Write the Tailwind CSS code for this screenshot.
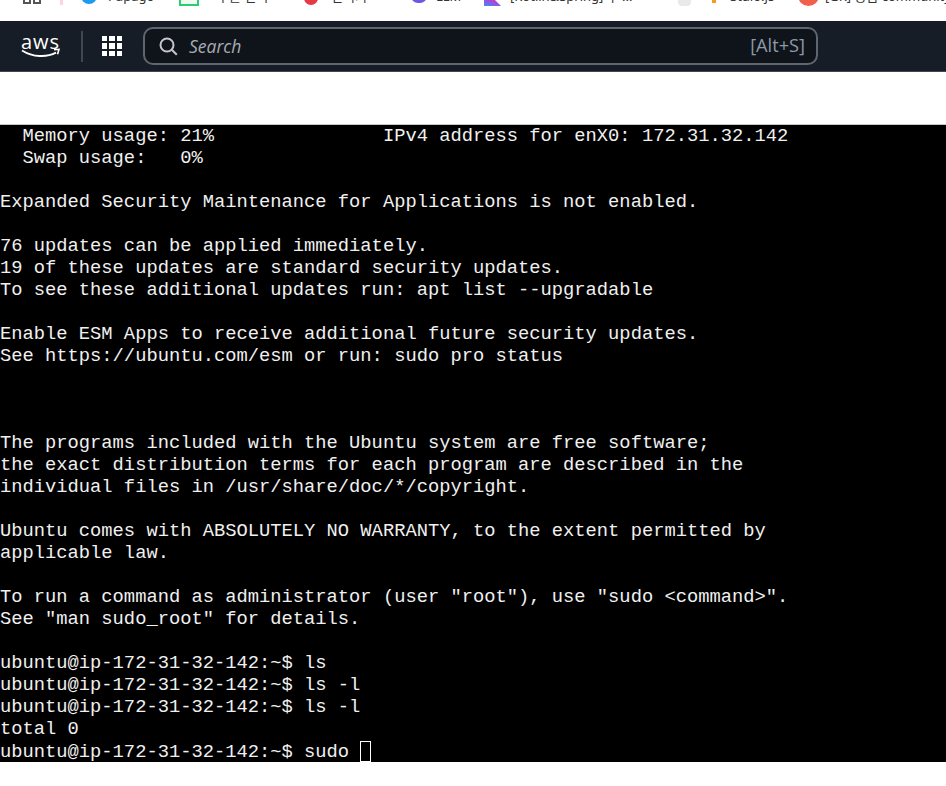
<!DOCTYPE html>
<html lang="en">
<head>
<meta charset="UTF-8">
<title>EC2 Instance Connect</title>
<script src="https://cdn.jsdelivr.net/npm/@tailwindcss/browser@4"></script>
</head>
<body class="bg-white h-[786px] overflow-hidden">
  <!-- browser bookmarks, cut off by the crop -->
  <div class="h-[21px] overflow-hidden bg-white relative font-['Noto_Sans','Noto_Sans_CJK_KR',sans-serif] text-[13px] text-[#333]">
    <div class="absolute left-[23px] top-[-10px] w-[8px] h-[14px] border-2 border-[#555]"></div>
    <div class="absolute left-[33px] top-[-10px] w-[8px] h-[14px] border-2 border-[#555]"></div>
    <div class="absolute left-[60px] top-[-10px] w-[3px] h-[15px] bg-[#f9d5e5]"></div>
    <div class="absolute left-[81px] top-[-10px] w-[16px] h-[14px] rounded-b-full bg-[#1d9bf0]"></div>
    <span class="absolute left-[108px] top-[-13px]">Papago</span>
    <div class="absolute left-[179px] top-[-10px] w-[20px] h-[16px] border-2 border-[#2ecc71] bg-[#eefaf2]"></div>
    <span class="absolute left-[217px] top-[-13px]">구글 번역</span>
    <div class="absolute left-[304px] top-[-10px] w-[14px] h-[15px] rounded-b-full bg-[#e53945]"></div>
    <span class="absolute left-[331px] top-[-13px]">번역기</span>
    <div class="absolute left-[411px] top-[-11px] w-[16px] h-[14px] rounded-full bg-[#6a5ae0]"></div>
    <span class="absolute left-[436px] top-[-13px]">LLM</span>
    <svg class="absolute left-[484px] top-0 w-[17px] h-[6px]" viewBox="0 0 17 6"><defs><linearGradient id="kt" x1="0" y1="1" x2="1" y2="0"><stop offset="0" stop-color="#3d8bff"/><stop offset="0.6" stop-color="#a04be0"/><stop offset="1" stop-color="#e2445c"/></linearGradient></defs><path d="M0 0h11l6 6H0z" fill="url(#kt)"/></svg>
    <span class="absolute left-[510px] top-[-13px]">[Kotlin&amp;Spring] 구 ...</span>
    <div class="absolute left-[678px] top-0 w-[13px] h-[6px] bg-[#c9c9c9]/40 rounded-b-sm"></div>
    <div class="absolute left-[712px] top-0 w-[4px] h-[3px] bg-[#f59b23]"></div>
    <span class="absolute left-[730px] top-[-13px]">Stdio.js</span>
    <div class="absolute left-[798px] top-[-15px] size-[21px] rounded-full bg-[#f0604d]"></div>
    <span class="absolute left-[825px] top-[-13px] whitespace-nowrap">[GK] 중급 community</span>
  </div>

  <!-- aws console header -->
  <header class="h-[51px] bg-[#161d26] border-b border-[#414750] flex items-center pl-[21px] pr-[128px]">
    <svg class="w-[40px] h-[26px] shrink-0" viewBox="0 0 40 26" fill="none">
      <text x="0" y="15.5" fill="#fff" font-family="'Open Sans',sans-serif" font-size="20" textLength="38">aws</text>
      <path d="M1 17.5c11 7 25 7 34 2.2" stroke="#fff" stroke-width="1.9" fill="none"/>
      <path d="M33 16.8l5-.5-1.5 5" stroke="#fff" stroke-width="1.6" fill="none"/>
    </svg>
    <div class="w-[2px] h-[31px] bg-[#414750] ml-[20px]"></div>
    <div class="ml-[19px] grid grid-cols-3 gap-[2px] w-[20px] shrink-0">
      <i class="block size-[5.3px] bg-white"></i><i class="block size-[5.3px] bg-white"></i><i class="block size-[5.3px] bg-white"></i>
      <i class="block size-[5.3px] bg-white"></i><i class="block size-[5.3px] bg-white"></i><i class="block size-[5.3px] bg-white"></i>
      <i class="block size-[5.3px] bg-white"></i><i class="block size-[5.3px] bg-white"></i><i class="block size-[5.3px] bg-white"></i>
    </div>
    <div class="ml-[21px] flex-1 h-[38px] rounded-[10px] border-2 border-[#5f6670] bg-[#0f141a] flex items-center pl-[14px] pr-[11px] font-['Open_Sans',sans-serif] text-[17.5px]">
      <svg class="w-[19px] h-[19px] shrink-0" viewBox="0 0 19 19" fill="none" stroke="#c6c6cd" stroke-width="2"><circle cx="8" cy="8" r="6.5"/><path d="M12.8 12.8l5 5"/></svg>
      <span class="ml-[11px] italic text-[#a8acb3]">Search</span>
      <span class="ml-auto text-[#8d99a8] text-[18.2px]">[Alt+S]</span>
    </div>
  </header>

  <div class="h-[53px] bg-white border-b border-[#c8c8c8]"></div>

  <!-- terminal -->
  <pre class="h-[637px] bg-black overflow-hidden text-[#f0f0f0] font-['Liberation_Mono',monospace] text-[18.77px] leading-[21.96px] pt-[1px]">  Memory usage: 21%               IPv4 address for enX0: 172.31.32.142
  Swap usage:   0%

Expanded Security Maintenance for Applications is not enabled.

76 updates can be applied immediately.
19 of these updates are standard security updates.
To see these additional updates run: apt list --upgradable

Enable ESM Apps to receive additional future security updates.
See https://ubuntu.com/esm or run: sudo pro status



The programs included with the Ubuntu system are free software;
the exact distribution terms for each program are described in the
individual files in /usr/share/doc/*/copyright.

Ubuntu comes with ABSOLUTELY NO WARRANTY, to the extent permitted by
applicable law.

To run a command as administrator (user "root"), use "sudo &lt;command&gt;".
See "man sudo_root" for details.

ubuntu@ip-172-31-32-142:~$ ls
ubuntu@ip-172-31-32-142:~$ ls -l
ubuntu@ip-172-31-32-142:~$ ls -l
total 0
ubuntu@ip-172-31-32-142:~$ sudo <span class="inline-block w-[11px] h-[21px] border border-white align-[-5px]"></span></pre>
</body>
</html>
